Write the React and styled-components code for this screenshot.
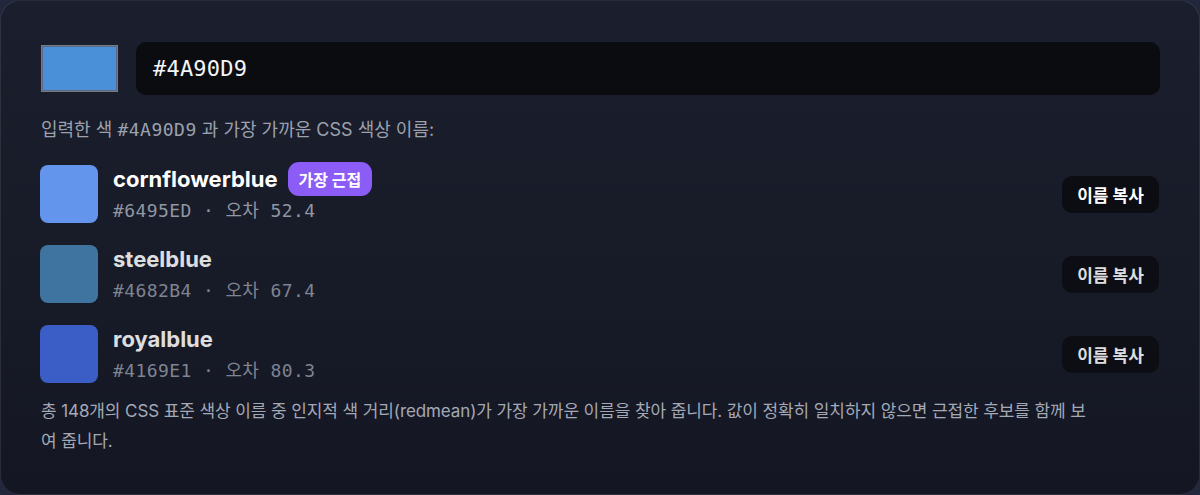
import React from "react";
import styled, { createGlobalStyle } from "styled-components";

const Global = createGlobalStyle`
  html, body { margin: 0; padding: 0; background: #22273d; }
  body {
    font-family: "Inter", "Noto Sans CJK KR", sans-serif;
    -webkit-font-smoothing: antialiased;
  }
  * { box-sizing: border-box; }
`;

const Card = styled.div`
  width: 1200px;
  height: 495px;
  border: 1px solid rgba(255, 255, 255, 0.09);
  border-radius: 20px;
  background: linear-gradient(180deg, #1b1e2c 0%, #171a27 60%, #141723 100%);
  padding: 41px 39px 0 39px;
  display: flex;
  flex-direction: column;
`;

const InputRow = styled.div`
  display: flex;
  align-items: center;
  gap: 18px;
`;

const ColorWell = styled.div`
  width: 77px;
  height: 47px;
  margin-left: 1px;
  border: 1px solid #767b88;
  background: ${(p) => p.$color};
  box-shadow: inset 0 0 0 1px #5b6a80;
`;

const HexField = styled.div`
  flex: 1;
  height: 53px;
  border-radius: 10px;
  background: #0b0c10;
  display: flex;
  align-items: center;
  padding-left: 17px;
  font-family: "DejaVu Sans Mono", monospace;
  font-size: 22px;
  color: #f4f5f7;
  letter-spacing: 0.2px;
`;

const Caption = styled.p`
  margin: 23px 0 0 1px;
  font-size: 18px;
  line-height: 24px;
  color: #9ba1ae;
`;

const Mono = styled.span`
  font-family: "DejaVu Sans Mono", "Noto Sans CJK KR", monospace;
  font-size: ${(p) => p.$size || 17}px;
  letter-spacing: 0.5px;
`;

const List = styled.div`
  display: flex;
  flex-direction: column;
  gap: 22px;
  margin-top: 23px;
`;

const Row = styled.div`
  display: flex;
  align-items: flex-start;
  gap: 15px;
  opacity: ${(p) => (p.$top ? 1 : 0.86)};
`;

const Swatch = styled.div`
  width: 58px;
  height: 58px;
  border-radius: 8px;
  background: ${(p) => p.$color};
  flex: none;
`;

const Info = styled.div`
  flex: 1;
  display: flex;
  flex-direction: column;
  gap: 6px;
`;

const NameLine = styled.div`
  display: flex;
  align-items: center;
  gap: 10px;
  height: 28px;
`;

const Name = styled.span`
  font-size: 22px;
  font-weight: 700;
  color: #ffffff;
  letter-spacing: 0px;
`;

const Badge = styled.span`
  background: #8b5cf6;
  color: #fff;
  font-size: 16px;
  font-weight: 700;
  border-radius: 11px;
  padding: 0 11px;
  height: 34px;
  display: inline-flex;
  align-items: center;
`;

const Meta = styled.div`
  color: #9096a3;
  font-family: "DejaVu Sans Mono", "Noto Sans CJK KR", monospace;
  font-size: 18px;
  letter-spacing: 0.4px;
  line-height: 24px;
`;

const CopyButton = styled.button`
  align-self: center;
  border: none;
  background: #0c0d12;
  color: #ffffff;
  font-family: "Inter", "Noto Sans CJK KR", sans-serif;
  font-size: 17px;
  font-weight: 700;
  width: 97px;
  height: 37px;
  padding: 0;
  border-radius: 10px;
  margin-right: 1px;
  cursor: pointer;
`;

const Footnote = styled.p`
  margin: 13px 0 0 1px;
  max-width: 1055px;
  font-size: 17px;
  line-height: 30px;
  color: #a4a9b6;
  letter-spacing: -0.1px;
`;

const matches = [
  { name: "cornflowerblue", hex: "#6495ED", dist: "52.4" },
  { name: "steelblue", hex: "#4682B4", dist: "67.4" },
  { name: "royalblue", hex: "#4169E1", dist: "80.3" },
];

export default function App() {
  return (
    <>
      <Global />
      <Card>
        <InputRow>
          <ColorWell $color="#4a90d9" />
          <HexField>#4A90D9</HexField>
        </InputRow>
        <Caption>
          입력한 색 <Mono $size={18}>#4A90D9</Mono> 과 가장 가까운 CSS 색상 이름:
        </Caption>
        <List>
          {matches.map((m, i) => (
            <Row key={m.name} $top={i === 0}>
              <Swatch $color={m.hex} />
              <Info>
                <NameLine>
                  <Name>{m.name}</Name>
                  {i === 0 && <Badge>가장 근접</Badge>}
                </NameLine>
                <Meta>
                  {m.hex} · 오차 {m.dist}
                </Meta>
              </Info>
              <CopyButton>이름 복사</CopyButton>
            </Row>
          ))}
        </List>
        <Footnote>
          총 148개의 CSS 표준 색상 이름 중 인지적 색 거리(redmean)가 가장 가까운 이름을 찾아 줍니다. 값이 정확히 일치하지 않으면 근접한 후보를 함께 보여 줍니다.
        </Footnote>
      </Card>
    </>
  );
}
